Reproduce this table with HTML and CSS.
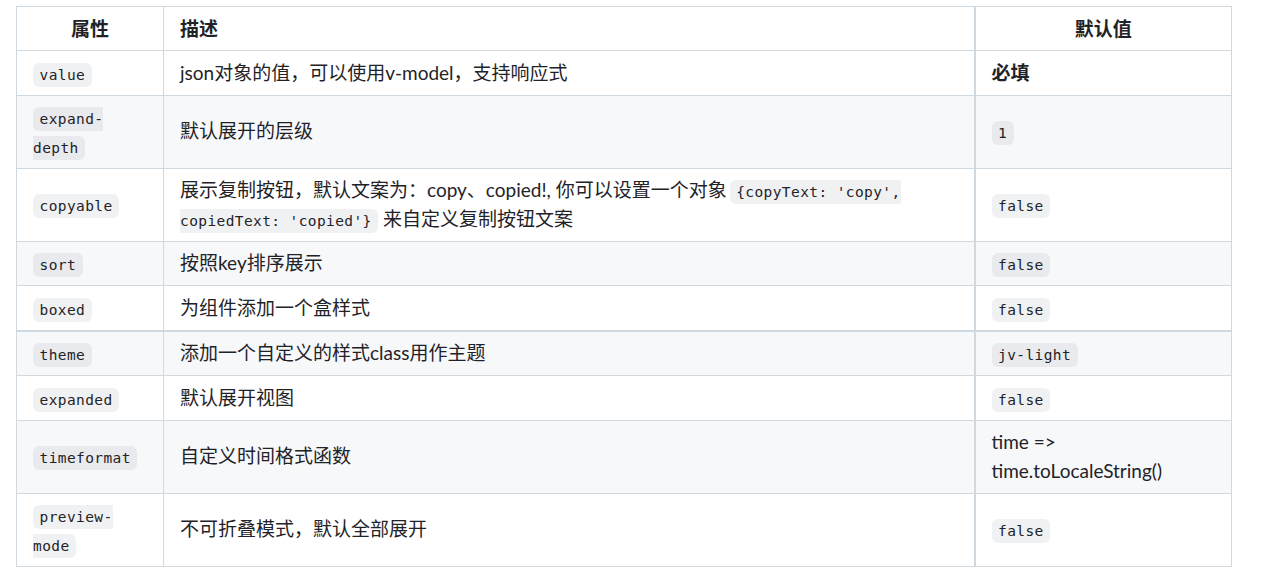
FILE: index.html
```html
<!DOCTYPE html>
<html lang="zh-CN">
<head>
<meta charset="utf-8">
<title>Props</title>
<link rel="stylesheet" href="styles.css">
</head>
<body>
<div class="wrap">
<table class="props">
  <colgroup>
    <col class="c1">
    <col class="c2">
    <col class="c3">
  </colgroup>
  <thead>
    <tr>
      <th class="center">属性</th>
      <th>描述</th>
      <th class="center def">默认值</th>
    </tr>
  </thead>
  <tbody>
    <tr>
      <td><code>value</code></td>
      <td>json对象的值，可以使用v-model，支持响应式</td>
      <td class="def"><strong>必填</strong></td>
    </tr>
    <tr>
      <td><code>expand-depth</code></td>
      <td>默认展开的层级</td>
      <td class="def"><code>1</code></td>
    </tr>
    <tr>
      <td><code>copyable</code></td>
      <td>展示复制按钮，默认文案为：copy、copied!, 你可以设置一个对象<code>{copyText: 'copy', copiedText: 'copied'}</code> 来自定义复制按钮文案</td>
      <td class="def"><code>false</code></td>
    </tr>
    <tr>
      <td><code>sort</code></td>
      <td>按照key排序展示</td>
      <td class="def"><code>false</code></td>
    </tr>
    <tr class="split">
      <td><code>boxed</code></td>
      <td>为组件添加一个盒样式</td>
      <td class="def"><code>false</code></td>
    </tr>
    <tr>
      <td><code>theme</code></td>
      <td>添加一个自定义的样式class用作主题</td>
      <td class="def"><code>jv-light</code></td>
    </tr>
    <tr>
      <td><code>expanded</code></td>
      <td>默认展开视图</td>
      <td class="def"><code>false</code></td>
    </tr>
    <tr>
      <td><code>timeformat</code></td>
      <td>自定义时间格式函数</td>
      <td class="def">time =&gt; time.toLocaleString()</td>
    </tr>
    <tr>
      <td><code>preview-mode</code></td>
      <td>不可折叠模式，默认全部展开</td>
      <td class="def"><code>false</code></td>
    </tr>
  </tbody>
</table>
</div>
</body>
</html>
```

FILE: styles.css
```css
html, body {
  margin: 0;
  padding: 0;
  background: #ffffff;
}

body {
  font-family: Lato, "Noto Sans CJK SC", sans-serif;
  font-size: 19px;
  line-height: 28.5px;
  color: #1f2328;
}

.wrap {
  padding: 6px 0 0 16px;
}

.props {
  border-collapse: collapse;
  table-layout: fixed;
  width: 1215px;
}

.c1 { width: 147px; }
.c2 { width: 811px; }
.c3 { width: 257px; }

.props th,
.props td {
  border: 1px solid #d1d9e0;
  padding: 7.5px 16px;
  text-align: left;
  vertical-align: middle;
}

.props thead th {
  line-height: 28px;
}

.props th {
  font-weight: 700;
}

.props th.center {
  text-align: center;
}

.props .def {
  border-left: 2px solid #d1d9e0;
}

.props tr.split td {
  border-bottom: 2px solid #d1d9e0;
}

.props tbody tr:nth-child(even) {
  background: #f6f8fa;
}

.props strong {
  font-weight: 700;
}

.props code {
  font-family: "DejaVu Sans Mono", monospace;
  font-size: 14.5px;
  letter-spacing: 0.4px;
  line-height: 1;
  padding: 4px 6.5px;
  margin-left: 3px;
  border-radius: 6px;
  background: rgba(129, 139, 152, 0.12);
}

.props td:first-child code,
.props td.def code {
  margin-left: 0;
}
```
